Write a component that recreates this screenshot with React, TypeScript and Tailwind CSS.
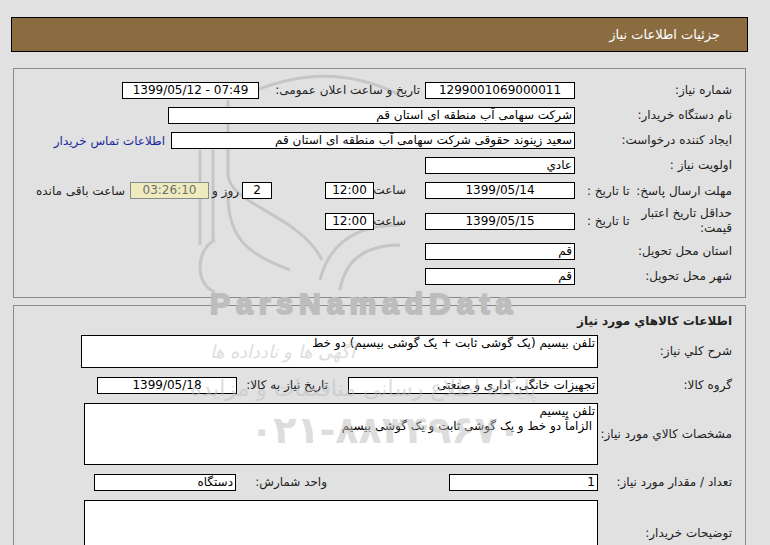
import React from 'react';

const Box: React.FC<{ w: string; children?: React.ReactNode; align?: string; h?: string; ltr?: boolean }> = ({ w, children, align = 'text-right', h = 'h-[17px]', ltr }) => (
  <div
    dir={ltr ? 'ltr' : undefined}
    className={`${w} ${h} ${align} shrink-0 border border-black bg-white px-[2px] leading-[15px] text-black`}
  >
    {children}
  </div>
);

const Label: React.FC<{ w: string; children?: React.ReactNode; className?: string }> = ({ w, children, className = '' }) => (
  <div className={`${w} shrink-0 leading-[15px] ${className}`}>{children}</div>
);

const App: React.FC = () => {
  return (
    <div
      dir="rtl"
      className="relative h-[545px] w-[770px] overflow-hidden bg-[#e1e1e1] text-[12px] text-[#222]"
      style={{ fontFamily: 'Tahoma, "DejaVu Sans", sans-serif' }}
    >
      {/* faint logo outline of the watermark */}
      <svg className="pointer-events-none absolute left-0 top-0" width="770" height="545" fill="none" stroke="#c6c6c6" strokeWidth="3">
        <path d="M200 150 L200 245" />
        <path d="M213 150 L213 240" />
        <path d="M228 195 C228 240 250 255 290 270" />
        <path d="M215 240 C195 250 195 285 215 292" />
        <path d="M320 280 C330 240 360 225 400 225" />
        <path d="M340 290 C345 260 365 245 400 245" />
        <path d="M228 100 L228 175 C230 205 300 215 322 260" />
        <path d="M245 95 C300 70 350 70 400 95" />
      </svg>

      {/* header */}
      <div className="ml-[11px] mr-[22px] mt-[17px] flex h-[35px] items-center border border-black bg-[#8b6c40] pr-[27px] text-[13px] text-white">
        جزئیات اطلاعات نیاز
      </div>

      {/* panel 1 */}
      <div className="relative ml-[13px] mr-[24px] mt-[16px] h-[230px] border border-[#8a8a8a] pr-[13px] pt-[9px]">
        <div className="flex h-[25px] items-center">
          <Label w="w-[157px]">شماره نیاز:</Label>
          <Box w="w-[150px]" align="text-center">1299001069000011</Box>
          <Label w="w-[166px]" className="pr-[5px]">تاریخ و ساعت اعلان عمومی:</Label>
          <Box w="w-[137px]" align="text-center" ltr>1399/05/12 - 07:49</Box>
        </div>
        <div className="flex h-[25px] items-center">
          <Label w="w-[157px]">نام دستگاه خریدار:</Label>
          <Box w="w-[407px]">شرکت سهامی آب منطقه ای استان قم</Box>
        </div>
        <div className="flex h-[25px] items-center">
          <Label w="w-[157px]">ایجاد کننده درخواست:</Label>
          <Box w="w-[404px]">سعید زینوند حقوقی شرکت سهامی آب منطقه ای استان قم</Box>
          <span className="mr-[6px] text-[#1d2a9e]">اطلاعات تماس خریدار</span>
        </div>
        <div className="flex h-[25px] items-center">
          <Label w="w-[157px]">اولویت نیاز :</Label>
          <Box w="w-[150px]">عادي</Box>
        </div>
        <div className="flex h-[25px] items-center">
          <div className="flex w-[157px] shrink-0 justify-between pl-[12px]">
            <span>مهلت ارسال پاسخ:</span>
            <span>تا تاریخ :</span>
          </div>
          <Box w="w-[150px]" align="text-center">1399/05/14</Box>
          <Label w="w-[51px]" className="pr-[19px]">ساعت</Label>
          <Box w="w-[49px]" align="text-center">12:00</Box>
          <div className="w-[53px] shrink-0" />
          <Box w="w-[30px]" align="text-center">2</Box>
          <span className="w-[33px] shrink-0 pr-[3px]">روز و</span>
          <div className="h-[17px] w-[79px] shrink-0 border border-[#8a8a8a] bg-[#eeecbf] text-center leading-[15px] text-[#6e6e6e]">03:26:10</div>
          <span className="mr-[5px]">ساعت باقی مانده</span>
        </div>
        <div className="flex h-[36px] items-center">
          <div className="flex w-[157px] shrink-0 items-center justify-between pl-[12px]">
            <span className="leading-[15px]">
              حداقل تاریخ اعتبار
              <br />
              قیمت:
            </span>
            <span>تا تاریخ :</span>
          </div>
          <Box w="w-[150px]" align="text-center">1399/05/15</Box>
          <Label w="w-[51px]" className="pr-[19px]">ساعت</Label>
          <Box w="w-[49px]" align="text-center">12:00</Box>
        </div>
        <div className="flex h-[25px] items-center">
          <Label w="w-[157px]">استان محل تحویل:</Label>
          <Box w="w-[150px]">قم</Box>
        </div>
        <div className="flex h-[25px] items-center">
          <Label w="w-[157px]">شهر محل تحویل:</Label>
          <Box w="w-[150px]">قم</Box>
        </div>
      </div>

      {/* panel 2 */}
      <div className="ml-[13px] mr-[24px] mt-[7px] h-[260px] border border-[#8a8a8a] pr-[13px] pt-[7px]">
        <div className="h-[16px] font-bold leading-[16px]">اطلاعات کالاهاي مورد نیاز</div>
        <div className="mt-[6px] flex items-center">
          <Label w="w-[134px]">شرح کلي نیاز:</Label>
          <Box w="w-[517px]" h="h-[33px]">تلفن بیسیم (یک گوشی ثابت + یک گوشی بیسیم) دو خط</Box>
        </div>
        <div className="mt-[9px] flex items-center">
          <Label w="w-[134px]">گروه کالا:</Label>
          <Box w="w-[250px]">تجهیزات خانگی، اداری و صنعتی</Box>
          <Label w="w-[111px]" className="pr-[20px]">تاریخ نیاز به کالا:</Label>
          <Box w="w-[140px]" align="text-center">1399/05/18</Box>
        </div>
        <div className="mt-[9px] flex items-center">
          <Label w="w-[134px]">مشخصات کالاي مورد نیاز:</Label>
          <Box w="w-[514px]" h="h-[62px]">
            <div>تلفن بیسیم</div>
            <div className="pr-[3px]">الزاماً دو خط و یک گوشی ثابت و یک گوشی بیسیم</div>
          </Box>
        </div>
        <div className="mt-[9px] flex items-center">
          <Label w="w-[134px]">تعداد / مقدار مورد نیاز:</Label>
          <Box w="w-[149px]">1</Box>
          <Label w="w-[213px]" className="pr-[122px]">واحد شمارش:</Label>
          <Box w="w-[142px]">دستگاه</Box>
        </div>
        <div className="mt-[9px] flex items-center">
          <Label w="w-[134px]">توضیحات خریدار:</Label>
          <Box w="w-[514px]" h="h-[66px]" />
        </div>
      </div>

      {/* watermark */}
      <div
        dir="ltr"
        className="pointer-events-none absolute left-[210px] top-[289px] text-[30px] font-bold leading-none tracking-[6px] text-[#bdbdbd] [-webkit-text-stroke:2px_#bdbdbd]"
        style={{ fontFamily: '"Liberation Sans", Arial, sans-serif' }}
      >
        ParsNamadData
      </div>
      <div className="pointer-events-none absolute left-[210px] top-[338px] text-[18px] italic text-[#bdbdbd] opacity-50">آگهی ها و نادداده ها</div>
      <div className="pointer-events-none absolute left-[190px] top-[372px] text-[22px] text-[#bdbdbd] opacity-50">پایگاه اطلاع رسانی مناقصات و مزایده</div>
      <div dir="ltr" className="pointer-events-none absolute left-[250px] top-[402px] text-[38px] font-bold text-[#bdbdbd] opacity-50">۰۲۱-۸۸۳۴۹۶۷۰</div>
    </div>
  );
};

export default App;
